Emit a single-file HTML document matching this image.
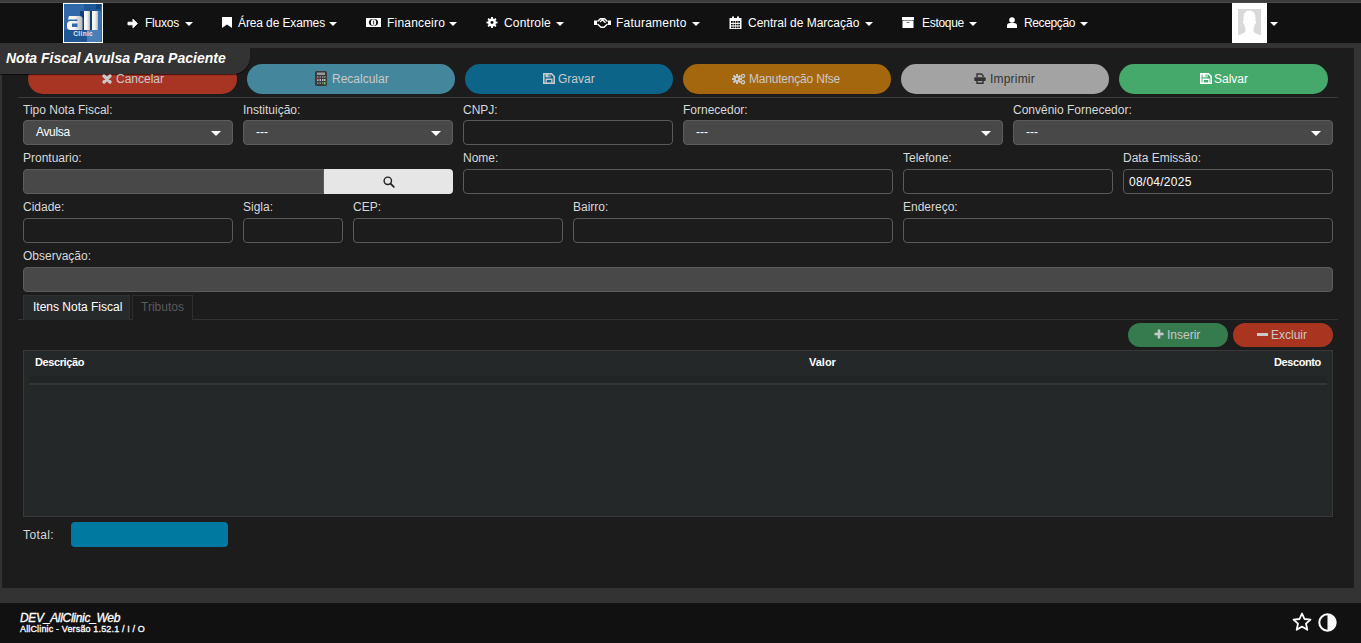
<!DOCTYPE html>
<html><head><meta charset="utf-8">
<style>
*{box-sizing:border-box;margin:0;padding:0}
html,body{width:1361px;height:643px;overflow:hidden;background:#333;font-family:"Liberation Sans",sans-serif;color:#ddd}
div,svg{position:absolute}
.t{line-height:1;white-space:nowrap}
#topstrip{left:0;top:0;width:1361px;height:3px;background:#3d3d3d;border-bottom:1px solid #494b49}
#nav{left:0;top:3px;width:1361px;height:40px;background:#111}
.ni{top:17px;font-size:12px;color:#fff;line-height:1;white-space:nowrap}
.caret{top:22px;width:0;height:0;border-left:4px solid transparent;border-right:4px solid transparent;border-top:4px solid #fff}
#panel{left:2px;top:48px;width:1352px;height:540px;background:#1c1c1c;border:1px solid #211b1b}
#tab{left:0;top:43px;width:250px;height:31px;background:#333;border-bottom-right-radius:17px;box-shadow:0 1px 1px rgba(0,0,0,.6)}
#title{left:6px;top:51px;font-size:14px;font-weight:bold;font-style:italic;color:#fff}
.btn{top:64px;height:30px;border-radius:15px}
.bt{top:73px;font-size:12px;line-height:1;white-space:nowrap}
.hr{height:1px;background:#3a3a3a}
.lbl{font-size:12px;color:#d8d8d8;line-height:1;white-space:nowrap}
.inp{height:25px;border:1px solid #5a5a5a;border-radius:4px;background:#1c1c1c}
.sel{height:25px;border:1px solid #5c5c5c;border-radius:4px;background:#484848}
.sel:after{content:"";position:absolute;right:11px;top:10px;border-left:5px solid transparent;border-right:5px solid transparent;border-top:5px solid #fff}
.st{font-size:12px;color:#fff;line-height:1;white-space:nowrap}
#footer{left:0;top:603px;width:1361px;height:40px;background:#111}
</style></head><body>
<div id="topstrip"></div>
<div id="nav"></div>
<!-- logo -->
<svg style="left:63px;top:3px" width="40" height="40" viewBox="0 0 40 40">
<defs><linearGradient id="lg" x1="0" x2="1" y1="0" y2="0"><stop offset="0" stop-color="#fff"/><stop offset="0.5" stop-color="#f2f2f2"/><stop offset="1" stop-color="#b8b8b8"/></linearGradient></defs>
<rect width="40" height="40" fill="#fff"/>
<rect x="1" y="1" width="38" height="38" fill="#3068aa"/>
<rect x="21" y="1" width="17" height="10" fill="#1f5797"/>
<rect x="33" y="1" width="5" height="5" fill="#0d4583"/>
<rect x="17" y="8" width="20" height="20" fill="#0d3f7b"/>
<rect x="35" y="8" width="3" height="20" fill="#3a72b0"/>
<rect x="1" y="27" width="23" height="12" fill="#1e5696"/>
<rect x="24" y="27" width="14" height="12" fill="#4a7fb8"/>
<path d="M6 13H16.5Q19.5 13 19.5 16V27H8Q4 27 4 23.5V21.5Q4 18 8 18H14.5V16.5H5Z" fill="url(#lg)"/>
<rect x="9" y="20.5" width="5.5" height="3.5" fill="#3068aa"/>
<rect x="21" y="8" width="6" height="19" fill="url(#lg)"/>
<rect x="29" y="8" width="6" height="19" fill="url(#lg)"/>
<text x="20.2" y="33" font-family="Liberation Sans" font-weight="bold" font-size="6.6" fill="#e8e8e8" text-anchor="middle" letter-spacing="0.3">Clinic</text>
</svg>
<!-- nav items -->
<svg style="left:127px;top:18px" width="11" height="11" viewBox="0 0 11 11"><path d="M1 4.2H6V1.2L10.3 5.5 6 9.8V6.8H1Z" fill="#fff" stroke="#fff" stroke-width="1" stroke-linejoin="round"/></svg>
<div class="ni" style="left:145px;letter-spacing:-0.22px">Fluxos</div><div class="caret" style="left:185px"></div>
<svg style="left:222px;top:17px" width="10" height="11" viewBox="0 0 10 11"><path d="M0 0H10V11L5 7.5 0 11Z" fill="#fff"/></svg>
<div class="ni" style="left:238px;letter-spacing:-0.12px">Área de Exames</div><div class="caret" style="left:329px"></div>
<svg style="left:366px;top:18px" width="15" height="9" viewBox="0 0 15 9"><rect width="15" height="9" fill="#fff"/><ellipse cx="7.5" cy="4.5" rx="4.6" ry="3.4" fill="#111"/><ellipse cx="7.5" cy="4.5" rx="2.6" ry="3.2" fill="#fff"/><rect x="7" y="2.5" width="1.2" height="4" fill="#555"/></svg>
<div class="ni" style="left:387px;letter-spacing:0.2px">Financeiro</div><div class="caret" style="left:449px"></div>
<svg style="left:486px;top:17px" width="12" height="11" viewBox="0 0 12 12"><g fill="#fff"><circle cx="6" cy="6" r="4.3"/><rect x="5" y="0" width="2" height="12"/><rect x="0" y="5" width="12" height="2"/><rect x="5" y="0" width="2" height="12" transform="rotate(45 6 6)"/><rect x="5" y="0" width="2" height="12" transform="rotate(-45 6 6)"/></g><circle cx="6" cy="6" r="1.6" fill="#111"/></svg>
<div class="ni" style="left:504px;letter-spacing:0.2px">Controle</div><div class="caret" style="left:556px"></div>
<svg style="left:594px;top:18px" width="17" height="10" viewBox="0 0 17 10"><path d="M0 2.5H3V7H0Z M14 2.5H17V7H14Z" fill="#fff"/><path d="M3.5 3.5L6.5 0.8H10.5L13.5 3.5 M3.5 6L7 9.2H10L13.5 6 M6 4L8.5 1.8 11.5 4.8" fill="none" stroke="#fff" stroke-width="1.4"/></svg>
<div class="ni" style="left:616px;letter-spacing:0.23px">Faturamento</div><div class="caret" style="left:692px"></div>
<svg style="left:729px;top:16px" width="13" height="13" viewBox="0 0 13 13"><path d="M0.5 2H12.5V13H0.5Z" fill="#fff"/><rect x="3" y="0.3" width="2" height="3.5" fill="#fff" rx="1"/><rect x="8" y="0.3" width="2" height="3.5" fill="#fff" rx="1"/><g fill="#111"><rect x="2" y="5" width="1.8" height="1.8"/><rect x="2" y="7.9" width="1.8" height="1.5"/><rect x="2" y="10.5" width="1.8" height="1.6"/><rect x="4.4" y="5" width="1.8" height="1.8"/><rect x="4.4" y="7.9" width="1.8" height="1.5"/><rect x="4.4" y="10.5" width="1.8" height="1.6"/><rect x="6.8" y="5" width="1.8" height="1.8"/><rect x="6.8" y="7.9" width="1.8" height="1.5"/><rect x="6.8" y="10.5" width="1.8" height="1.6"/><rect x="9.2" y="5" width="1.8" height="1.8"/><rect x="9.2" y="7.9" width="1.8" height="1.5"/><rect x="9.2" y="10.5" width="1.8" height="1.6"/></g></svg>
<div class="ni" style="left:748px;letter-spacing:0px">Central de Marcação</div><div class="caret" style="left:865px"></div>
<svg style="left:902px;top:17px" width="12" height="11" viewBox="0 0 12 11"><rect x="0" y="0" width="12" height="3" fill="#fff"/><rect x="0.5" y="3.5" width="11" height="7.5" fill="#fff"/><rect x="4.5" y="5" width="3" height="1" fill="#777"/></svg>
<div class="ni" style="left:922px;letter-spacing:-0.29px">Estoque</div><div class="caret" style="left:969px"></div>
<svg style="left:1007px;top:17px" width="10" height="11" viewBox="0 0 10 11"><circle cx="5" cy="3" r="2.8" fill="#fff"/><path d="M0 11V8.5Q0 6 3 6H7Q10 6 10 8.5V11Z" fill="#fff"/></svg>
<div class="ni" style="left:1024px;letter-spacing:-0.37px">Recepção</div><div class="caret" style="left:1080px"></div>
<!-- avatar -->
<div style="left:1232px;top:3px;width:35px;height:40px;background:#fff"></div>
<svg style="left:1238px;top:9px" width="23" height="28" viewBox="0 0 23 28"><rect width="23" height="27.5" fill="#d9d9d9"/><path d="M11.5 1.7C7.2 1.7 5.6 4.3 5.6 8V11.8Q4.8 12.3 5 13.5Q5.3 15 6.3 15.5Q6.8 18 7.5 19.5L7.3 23Q3.5 25.5 0 26.5V28H23V26.5Q19.5 25.5 15.7 23L15.5 19.5Q16.2 18 16.7 15.5Q17.7 15 18 13.5Q18.2 12.3 17.4 11.8V8C17.4 4.3 15.8 1.7 11.5 1.7Z" fill="#fff"/></svg>
<div class="caret" style="left:1270px;top:22px"></div>

<!-- panel -->
<div id="panel"></div>

<!-- action buttons -->
<div class="btn" style="left:28px;width:209px;background:#a83424"></div>
<div class="btn" style="left:247px;width:208px;background:#44879c"></div>
<div class="btn" style="left:465px;width:208px;background:#0c6589"></div>
<div class="btn" style="left:683px;width:208px;background:#a4670d"></div>
<div class="btn" style="left:901px;width:208px;background:#a3a3a3"></div>
<div class="btn" style="left:1119px;width:209px;background:#45a96b"></div>
<div id="tab"></div>
<div id="title" class="t">Nota Fiscal Avulsa Para Paciente</div>
<svg style="left:102px;top:74px" width="10" height="10" viewBox="0 0 10 10"><path d="M2 2L8 8M8 2L2 8" stroke="#c9c9c9" stroke-width="3.2" stroke-linecap="round"/></svg>
<div class="bt" style="left:116px;color:#c9c9c9">Cancelar</div>
<svg style="left:315px;top:71px" width="12" height="15" viewBox="0 0 12 15"><rect x="0" y="0" width="12" height="15" rx="1.5" fill="#3a3a3a"/><rect x="2" y="1.5" width="8" height="2.5" fill="#999"/><g fill="#bbb"><rect x="2" y="5.5" width="1.5" height="1"/><rect x="4.5" y="5.5" width="1.5" height="1"/><rect x="7" y="5.5" width="1.5" height="1"/><rect x="9" y="5.5" width="1.5" height="1"/><rect x="2" y="8" width="1.5" height="2"/><rect x="4.5" y="8" width="1.5" height="2"/><rect x="7" y="8" width="1.5" height="2"/><rect x="2" y="11.5" width="1.5" height="1"/><rect x="4.5" y="11.5" width="1.5" height="1"/><rect x="7" y="11.5" width="1.5" height="1"/></g><rect x="9" y="8" width="1.5" height="2" fill="#bbb"/><rect x="9" y="11" width="1.5" height="2.5" fill="#5c5"/><rect x="1.5" y="7.5" width="2" height="1" fill="#c33"/></svg>
<div class="bt" style="left:332px;color:#c9c9c9">Recalcular</div>
<svg style="left:543px;top:73px" width="12" height="11" viewBox="0 0 12 11"><path d="M0.8 0.8H8.5L11.2 3.5V10.2H0.8Z" fill="none" stroke="#c9c9c9" stroke-width="1.6"/><rect x="2.5" y="0.8" width="5" height="3.5" fill="#c9c9c9"/><rect x="5.5" y="1.5" width="1.2" height="2" fill="#0c6589"/><rect x="2.5" y="5.5" width="7" height="4.7" fill="#c9c9c9"/><rect x="3.8" y="7" width="4.4" height="2.4" fill="#0c6589"/></svg>
<div class="bt" style="left:558px;color:#c9c9c9">Gravar</div>
<svg style="left:732px;top:73px" width="14" height="12" viewBox="0 0 14 12"><g fill="#c9c9c9"><circle cx="5" cy="6" r="3.3"/><rect x="4" y="1" width="2" height="10"/><rect x="0" y="5" width="10" height="2"/><rect x="4" y="1" width="2" height="10" transform="rotate(45 5 6)"/><rect x="4" y="1" width="2" height="10" transform="rotate(-45 5 6)"/><circle cx="11" cy="3" r="2.2"/><circle cx="11" cy="9.2" r="2.2"/></g><circle cx="5" cy="6" r="1.2" fill="#a86910"/><circle cx="11" cy="3" r="0.9" fill="#a86910"/><circle cx="11" cy="9.2" r="0.9" fill="#a86910"/></svg>
<div class="bt" style="left:749px;color:#c9c9c9;letter-spacing:-0.2px">Manutenção Nfse</div>
<svg style="left:974px;top:73px" width="12" height="11" viewBox="0 0 12 11"><path d="M3 4V1H7.5L9 2.5V4" fill="none" stroke="#333" stroke-width="1.4"/><rect x="0.3" y="4.2" width="11.4" height="3.8" rx="0.8" fill="#333"/><path d="M3 7V10.2H9V7" fill="none" stroke="#333" stroke-width="1.4"/></svg>
<div class="bt" style="left:990px;color:#333;letter-spacing:0.2px">Imprimir</div>
<svg style="left:1200px;top:73px" width="12" height="11" viewBox="0 0 12 11"><path d="M0.8 0.8H8.5L11.2 3.5V10.2H0.8Z" fill="none" stroke="#fff" stroke-width="1.6"/><rect x="2.5" y="0.8" width="5" height="3.5" fill="#fff"/><rect x="5.5" y="1.5" width="1.2" height="2" fill="#45a96b"/><rect x="2.5" y="5.5" width="7" height="4.7" fill="#fff"/><rect x="3.8" y="7" width="4.4" height="2.4" fill="#45a96b"/></svg>
<div class="bt" style="left:1214px;color:#fff">Salvar</div>

<div class="hr" style="left:18px;top:97px;width:1320px"></div>

<!-- row 1 -->
<div class="lbl" style="left:23px;top:104px">Tipo Nota Fiscal:</div>
<div class="lbl" style="left:243px;top:104px">Instituição:</div>
<div class="lbl" style="left:463px;top:104px">CNPJ:</div>
<div class="lbl" style="left:683px;top:104px">Fornecedor:</div>
<div class="lbl" style="left:1013px;top:104px">Convênio Fornecedor:</div>
<div class="sel" style="left:23px;top:120px;width:210px"></div><div class="st" style="left:36px;top:126px;letter-spacing:-0.35px">Avulsa</div>
<div class="sel" style="left:243px;top:120px;width:210px"></div><div class="st" style="left:256px;top:126px">---</div>
<div class="inp" style="left:463px;top:120px;width:210px"></div>
<div class="sel" style="left:683px;top:120px;width:320px"></div><div class="st" style="left:696px;top:126px">---</div>
<div class="sel" style="left:1013px;top:120px;width:320px"></div><div class="st" style="left:1026px;top:126px">---</div>

<!-- row 2 -->
<div class="lbl" style="left:23px;top:152px">Prontuario:</div>
<div class="lbl" style="left:463px;top:152px">Nome:</div>
<div class="lbl" style="left:903px;top:152px">Telefone:</div>
<div class="lbl" style="left:1123px;top:152px">Data Emissão:</div>
<div style="left:23px;top:169px;width:301px;height:25px;background:#484848;border:1px solid #5c5c5c;border-radius:4px 0 0 4px"></div>
<div style="left:324px;top:169px;width:129px;height:25px;background:#e6e6e6;border-radius:0 4px 4px 0"></div>
<svg style="left:383px;top:176px" width="12" height="12" viewBox="0 0 12 12"><circle cx="4.8" cy="4.8" r="3.7" fill="none" stroke="#222" stroke-width="1.4"/><path d="M7.6 7.6L10.8 10.8" stroke="#222" stroke-width="1.7" stroke-linecap="round"/></svg>
<div class="inp" style="left:463px;top:169px;width:430px"></div>
<div class="inp" style="left:903px;top:169px;width:210px"></div>
<div class="inp" style="left:1123px;top:169px;width:210px"></div><div class="st" style="left:1129px;top:176px;letter-spacing:0.25px">08/04/2025</div>

<!-- row 3 -->
<div class="lbl" style="left:23px;top:201px">Cidade:</div>
<div class="lbl" style="left:243px;top:201px">Sigla:</div>
<div class="lbl" style="left:353px;top:201px">CEP:</div>
<div class="lbl" style="left:573px;top:201px">Bairro:</div>
<div class="lbl" style="left:903px;top:201px">Endereço:</div>
<div class="inp" style="left:23px;top:218px;width:210px"></div>
<div class="inp" style="left:243px;top:218px;width:100px"></div>
<div class="inp" style="left:353px;top:218px;width:210px"></div>
<div class="inp" style="left:573px;top:218px;width:320px"></div>
<div class="inp" style="left:903px;top:218px;width:430px"></div>

<!-- row 4 -->
<div class="lbl" style="left:23px;top:250px">Observação:</div>
<div class="inp" style="left:23px;top:267px;width:1310px;background:#484848;border-color:#5c5c5c"></div>

<!-- tabs -->
<div class="hr" style="left:18px;top:319px;width:1320px;background:#333"></div>
<div style="left:23px;top:295px;width:107px;height:25px;background:#262a2b;border:1px solid #2e3233;border-bottom:0"></div>
<div class="t" style="left:33px;top:301px;font-size:12px;color:#fff">Itens Nota Fiscal</div>
<div style="left:132px;top:295px;width:61px;height:25px;background:#1c1c1c;border:1px solid #2e2e2e;border-bottom:0"></div>
<div class="t" style="left:141px;top:301px;font-size:12px;color:#5a5a5a">Tributos</div>

<!-- inserir / excluir -->
<div style="left:1128px;top:323px;width:100px;height:24px;border-radius:12px;background:#367b4e"></div>
<div style="left:1233px;top:323px;width:100px;height:24px;border-radius:12px;background:#a9341f"></div>
<svg style="left:1154px;top:329px" width="10" height="10" viewBox="0 0 10 10"><path d="M5 0.5V9.5M0.5 5H9.5" stroke="#c9c9c9" stroke-width="2.6"/></svg>
<div class="t" style="left:1167px;top:329px;font-size:12px;color:#c9c9c9">Inserir</div>
<div style="left:1257px;top:333px;width:11px;height:3px;background:#c9c9c9"></div>
<div class="t" style="left:1271px;top:329px;font-size:12px;color:#c9c9c9">Excluir</div>

<!-- table -->
<div style="left:23px;top:350px;width:1310px;height:167px;background:#252829;border:1px solid #383838"></div>
<div style="left:29px;top:376px;width:1298px;height:7px;background:#222526"></div>
<div style="left:29px;top:383px;width:1298px;height:2px;background:#353535"></div>
<div class="t" style="left:35px;top:357px;font-size:11px;font-weight:bold;color:#fff;letter-spacing:-0.4px">Descrição</div>
<div class="t" style="left:809px;top:357px;font-size:11px;font-weight:bold;color:#fff">Valor</div>
<div class="t" style="left:1274px;top:357px;font-size:11px;font-weight:bold;color:#fff;letter-spacing:-0.4px">Desconto</div>

<!-- total -->
<div class="t" style="left:23px;top:529px;font-size:12px;color:#d8d8d8;letter-spacing:0.4px">Total:</div>
<div style="left:71px;top:522px;width:157px;height:25px;border-radius:4px;background:#0079a1"></div>

<div id="footer"></div>
<div class="t" style="left:20px;top:612px;font-size:12px;font-style:italic;color:#fff;letter-spacing:-0.3px;-webkit-text-stroke:0.3px #fff">DEV_AllClinic_Web</div>
<div class="t" style="left:20px;top:625px;font-size:9px;color:#fff;letter-spacing:0.15px;-webkit-text-stroke:0.3px #fff">AllClinic - Versão 1.52.1 / I / O</div>
<svg style="left:1292px;top:612px" width="20" height="20" viewBox="0 0 20 20"><path d="M10 1.5L12.5 7 18.5 7.6 14 11.6 15.3 17.8 10 14.6 4.7 17.8 6 11.6 1.5 7.6 7.5 7Z" fill="none" stroke="#fff" stroke-width="1.8" stroke-linejoin="round"/></svg>
<svg style="left:1318px;top:613px" width="19" height="19" viewBox="0 0 19 19"><circle cx="9.5" cy="9.5" r="8.2" fill="none" stroke="#fff" stroke-width="2"/><path d="M9.5 1.3A8.2 8.2 0 0 1 9.5 17.7Z" fill="#fff"/></svg>
</body></html>
